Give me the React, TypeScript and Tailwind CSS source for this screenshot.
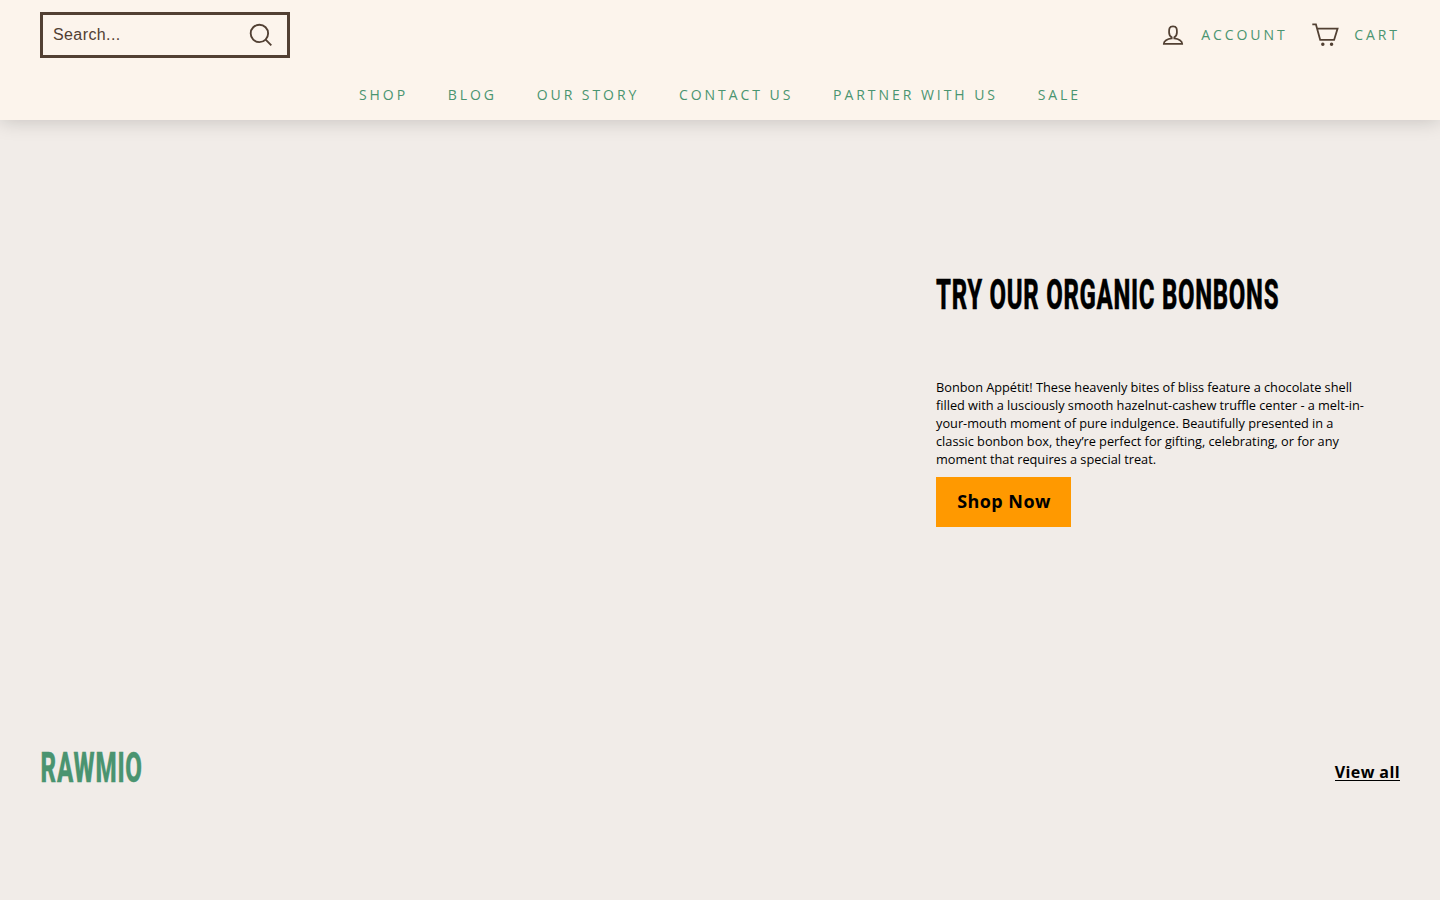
import React from 'react';

const links = ['SHOP', 'BLOG', 'OUR STORY', 'CONTACT US', 'PARTNER WITH US', 'SALE'];

function Icon({ className, children }: { className: string; children: React.ReactNode }) {
  return (
    <svg viewBox="0 0 64 64" fill="none" stroke="#524033" strokeWidth={4} className={className} aria-hidden="true">
      {children}
    </svg>
  );
}

function Header() {
  return (
    <header className="relative h-[120px] bg-[#fcf4ec] shadow-[0_0_20px_rgba(0,0,0,0.2)]">
      <div className="flex h-[70px] items-center justify-between px-10">
        <form className="flex h-[46px] w-[250px] items-center border-[3px] border-[#524033] pr-[11px] pl-[10px]">
          <input
            aria-label="Search"
            placeholder="Search..."
            className="w-0 flex-1 bg-transparent font-['Liberation_Sans',sans-serif] text-[16px] tracking-[0.4px] text-[#524033] outline-none placeholder:text-[#524033]"
          />
          <Icon className="size-[30px]">
            <path d="M47.16 28.58A18.58 18.58 0 1 1 28.58 10a18.58 18.58 0 0 1 18.58 18.58zM54 54L41.94 42" />
          </Icon>
        </form>
        <div className="flex items-center text-[14px] tracking-[2.95px] text-[#4a9470]">
          <a className="flex items-center">
            <Icon className="mr-[14.5px] size-7">
              <path d="M35 39.84v-2.53c3.3-1.91 6-6.66 6-11.42 0-7.63 0-13.82-9-13.82s-9 6.19-9 13.82c0 4.76 2.7 9.51 6 11.42v2.53c-10.18.85-18 6-18 12.16h42c0-6.19-7.82-11.31-18-12.16z" />
            </Icon>
            <span className="pb-[2px]">ACCOUNT</span>
          </a>
          <a className="ml-[23.5px] flex items-center">
            <Icon className="mr-[15px] size-7">
              <path d="M14 17.44h46.79l-7.94 25.61H20.96l-9.65-35.1H3" />
              <circle cx="27" cy="53" r="2" />
              <circle cx="47" cy="53" r="2" />
            </Icon>
            <span className="pb-[2px]">CART</span>
          </a>
        </div>
      </div>
      <nav className="flex h-[48px] items-center justify-center gap-[39.7px] text-[14px] tracking-[2.95px] text-[#4a9470]">
        {links.map((l) => (
          <a key={l}>{l}</a>
        ))}
      </nav>
    </header>
  );
}

export default function App() {
  return (
    <div className="flex h-[900px] w-full flex-col overflow-hidden bg-[#f1ece8] font-['Open_Sans',sans-serif] text-black">
      <Header />
      <section className="flex h-[602px] flex-col pt-[149px] pl-[936px]">
        <h1 className="h-[50px] w-max origin-left scale-x-[0.558] font-[Roboto,sans-serif] text-[43px] leading-[50px] font-extrabold tracking-[1.2px] whitespace-nowrap [-webkit-text-stroke:0.4px_currentColor]">
          TRY OUR ORGANIC BONBONS
        </h1>
        <p className="mt-[59px] w-[430px] text-[12.75px] leading-[18px] [word-spacing:-0.12px]">
          Bonbon Appétit! These heavenly bites of bliss feature a chocolate shell filled with a lusciously smooth
          hazelnut-cashew truffle center - a melt-in-your-mouth moment of pure indulgence. Beautifully presented in a
          classic bonbon box, they’re perfect for gifting, celebrating, or for any moment that requires a special treat.
        </p>
        <button className="mt-[9px] h-[50px] w-[135px] bg-[#ff9900] pb-[2px] pl-[1px] text-[18px] font-bold tracking-[0.45px]">
          Shop Now
        </button>
      </section>
      <section className="flex h-[100px] items-start justify-between px-10 pt-[20px]">
        <h2 className="h-[50px] w-max origin-left scale-x-[0.562] pl-[1px] font-[Roboto,sans-serif] text-[43px] leading-[50px] font-extrabold tracking-[1.4px] text-[#4a9470] [-webkit-text-stroke:0.4px_currentColor]">
          RAWMIO
        </h2>
        <a className="mt-[22px] border-b border-black text-[16px] leading-[16px] font-bold tracking-[0.4px]">View all</a>
      </section>
    </div>
  );
}
